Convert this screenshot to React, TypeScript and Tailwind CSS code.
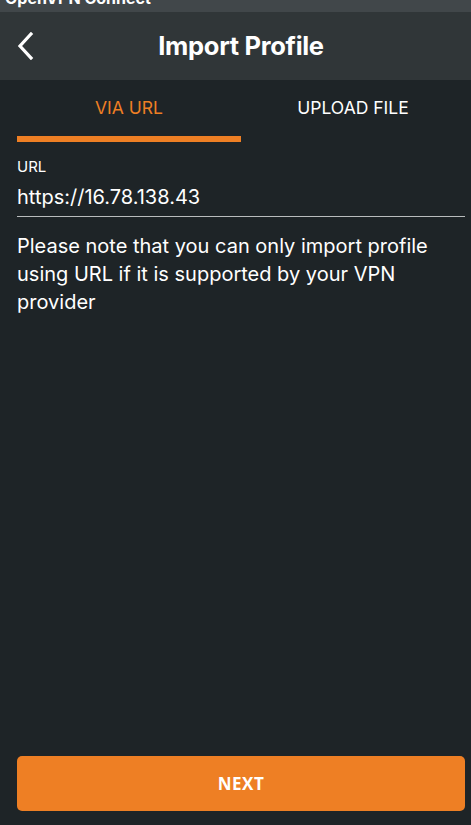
import React from 'react';

export default function App() {
  return (
    <div className="w-[471px] h-[825px] flex flex-col bg-[#1e2427] text-white font-['Inter',sans-serif] overflow-hidden">
      {/* Window title bar, cut off at the top */}
      <div className="h-[12px] bg-[#41474a] overflow-hidden relative shrink-0">
        <div className="absolute left-[5px] bottom-[6px] text-[16px] leading-[16px] font-bold whitespace-nowrap">
          OpenVPN Connect
        </div>
      </div>

      {/* Header */}
      <div className="h-[68px] bg-[#303638] flex items-center relative shrink-0 pl-[17px] pr-[6px]">
        <button className="absolute left-[14px] top-[20px] w-[22px] h-[28px] flex items-center justify-center">
          <svg width="18" height="28" viewBox="0 0 18 28" fill="none">
            <path d="M15 2 L4 14 L15 26" stroke="white" strokeWidth="3.2" strokeLinecap="square" />
          </svg>
        </button>
        <h1 className="flex-1 text-center text-[25.5px] font-bold tracking-[-0.3px] pt-[1px]">Import Profile</h1>
      </div>

      {/* Tabs */}
      <div className="pl-[17px] pr-[6px] flex shrink-0">
        <div className="flex-1 flex flex-col items-center">
          <div className="h-[56px] flex items-center text-[17.5px] text-[#ee7f24]">VIA URL</div>
          <div className="self-stretch h-[6px] bg-[#ee7f24]" />
        </div>
        <div className="flex-1 flex flex-col items-center">
          <div className="h-[56px] flex items-center text-[17.5px] text-white">UPLOAD FILE</div>
        </div>
      </div>

      {/* URL field */}
      <div className="pl-[17px] pr-[6px] pt-[17px] shrink-0">
        <div className="text-[15px] leading-[16px]">URL</div>
        <div className="border-b border-[#b9bcbd] pt-[9px] pb-[6px] text-[20px] leading-[26px]">
          https://16.78.138.43
        </div>
        <p className="mt-[15px] text-[20px] leading-[28px] pr-[10px]">
          Please note that you can only import profile using URL if it is supported by your VPN provider
        </p>
      </div>

      <div className="flex-1" />

      {/* Next button */}
      <div className="pl-[17px] pr-[6px] pb-[14px] shrink-0">
        <button className="w-full h-[55px] rounded-[5px] bg-[#ee7f24] text-white text-[17px] font-bold tracking-[0.5px] font-['Open_Sans',sans-serif]">
          NEXT
        </button>
      </div>
    </div>
  );
}
